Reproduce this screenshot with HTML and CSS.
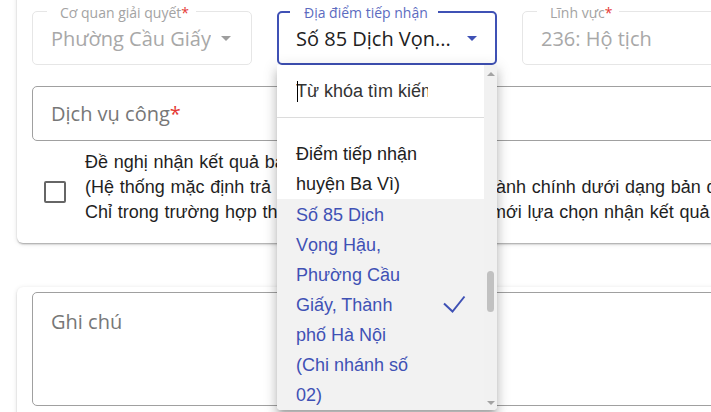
FILE: index.html
```html
<!DOCTYPE html>
<html lang="vi">
<head>
<meta charset="utf-8">
<title>Nộp hồ sơ</title>
<link rel="stylesheet" href="styles.css">
</head>
<body>
<div class="page">
  <div class="card card-top">
    <div class="row">
      <div class="field disabled">
        <span class="flabel">Cơ quan giải quyết<span class="req">*</span></span>
        <span class="fvalue">Phường Cầu Giấy</span>
        <span class="arrow"></span>
      </div>
      <div class="field focused">
        <span class="flabel">Địa điểm tiếp nhận</span>
        <span class="fvalue">Số 85 Dịch Vọn...</span>
        <span class="arrow"></span>
      </div>
      <div class="field disabled">
        <span class="flabel">Lĩnh vực<span class="req">*</span></span>
        <span class="fvalue">236: Hộ tịch</span>
        <span class="arrow"></span>
      </div>
    </div>
    <div class="input-box"><span class="ph">Dịch vụ công<span class="req">*</span></span></div>
    <div class="check-row">
      <span class="checkbox"></span>
      <div class="check-text">
        <div>Đề nghị nhận kết quả bản giấy</div>
        <div>(Hệ thống mặc định trả kết quả giải quyết thủ tục hành chính dưới dạng bản điện tử.</div>
        <div>Chỉ trong trường hợp thực sự cần thiết, công dân mới lựa chọn nhận kết quả bản giấy)</div>
      </div>
    </div>
  </div>
  <div class="card card-note">
    <div class="textarea"><span class="ph">Ghi chú</span></div>
  </div>
</div>

<div class="dropdown">
  <div class="dd-main">
    <div class="dd-search"><span class="caret"></span><span class="search-text">Từ khóa tìm kiếm</span></div>
    <div class="dd-list">
      <div class="option">
        <span class="opt-text">Điểm tiếp nhận huyện Ba Vì)</span>
      </div>
      <div class="option selected">
        <span class="opt-text">Số 85 Dịch Vọng Hậu, Phường Cầu Giấy, Thành phố Hà Nội (Chi nhánh số 02)</span>
        <svg class="check" width="24" height="18" viewBox="0 0 24 18"><polyline points="2,8.5 10.5,16.5 22.5,1.5" fill="none" stroke="#3f51b5" stroke-width="2"/></svg>
      </div>
    </div>
  </div>
  <div class="scrollbar">
    <span class="sb-up"></span>
    <span class="sb-track"><span class="sb-thumb"></span></span>
    <span class="sb-down"></span>
  </div>
</div>
</body>
</html>
```
FILE: styles.css
```css
* { box-sizing: border-box; }
html, body { margin: 0; padding: 0; background: #fff; overflow: hidden; }
body {
  width: 711px;
  height: 412px;
  position: relative;
  font-family: "Liberation Sans", Arial, sans-serif;
  color: #212121;
}

.page { padding-left: 17px; }

.card {
  background: #fff;
  width: 760px;
  border-radius: 6px;
  box-shadow: 0 2px 2px -1px rgba(0,0,0,.22), 0 1px 2px rgba(0,0,0,.12), 0 1px 5px rgba(0,0,0,.12);
}
.card-top {
  margin-top: -20px;
  height: 263px;
  padding: 31px 0 0 15px;
}

.row { display: flex; gap: 25px; }

.field {
  position: relative;
  width: 220px;
  height: 54px;
  flex: none;
  display: flex;
  align-items: center;
  padding: 0 20px 0 18px;
  border: 1px solid #e6e6e6;
  border-radius: 5px;
  font-family: "Open Sans", "Noto Sans", sans-serif;
  font-size: 20px;
  color: #a8a8a8;
}
.field .fvalue { white-space: nowrap; overflow: hidden; }
.field .flabel {
  position: absolute;
  top: -7px;
  left: 14px;
  padding: 0 7px 0 13px;
  background: #fff;
  font-size: 14px;
  line-height: 16px;
  color: #a3a3a3;
  white-space: nowrap;
}
.req { color: #e53935; }
.arrow {
  margin-left: auto;
  width: 0; height: 0;
  border-left: 5px solid transparent;
  border-right: 5px solid transparent;
  border-top: 5px solid #9e9e9e;
}
.field.focused {
  border: 2px solid #3f51b5;
  padding: 0 18px 0 17px;
  color: #212121;
}
.field.focused .fvalue { margin-right: 4px; }
.field.focused .flabel { left: 11px; top: -8px; padding: 0 10px 0 14px; color: #5c6bc0; }
.field.focused .arrow { border-top-color: #3f51b5; }

.input-box {
  margin-top: 21px;
  height: 55px;
  border: 1px solid #a0a0a0;
  border-radius: 5px;
  display: flex;
  align-items: center;
  padding-left: 18px;
  font-family: "Open Sans", "Noto Sans", sans-serif;
  font-size: 20px;
  color: #777;
}

.check-row {
  display: flex;
  align-items: center;
  margin-top: 9px;
  padding-left: 12px;
}
.checkbox {
  width: 22px; height: 22px;
  flex: none;
  border: 2px solid #666;
  border-radius: 2px;
  margin-top: 8px;
}
.check-text {
  margin-left: 19px;
  font-size: 18px;
  word-spacing: 0.7px;
  line-height: 25px;
  white-space: nowrap;
  color: #1f1f1f;
}

.card-note {
  margin-top: 44px;
  height: 200px;
  padding: 5px 0 0 15px;
}
.textarea {
  height: 114px;
  border: 1px solid #a0a0a0;
  border-radius: 5px;
  padding: 16px 18px;
  font-family: "Open Sans", "Noto Sans", sans-serif;
  font-size: 20px;
  line-height: 26px;
  color: #777;
}

/* dropdown overlay */
.dropdown {
  position: absolute;
  left: 277px;
  top: 65px;
  width: 220px;
  height: 345px;
  background: #fff;
  display: flex;
  border-radius: 0 0 4px 4px;
  overflow: hidden;
  box-shadow: 0 5px 5px -3px rgba(0,0,0,.2), 0 8px 10px 1px rgba(0,0,0,.14), 0 3px 14px 2px rgba(0,0,0,.12);
}
.dd-main { width: 207px; flex: none; display: flex; flex-direction: column; }
.dd-search {
  height: 53px;
  flex: none;
  border-bottom: 1px solid #dcdcdc;
  display: flex;
  align-items: center;
  padding-left: 19px;
  font-size: 18px;
  color: #333;
  position: relative;
}
.search-text { width: 132px; overflow: hidden; white-space: nowrap; }
.caret {
  position: absolute;
  left: 20px;
  top: 16px;
  width: 1px;
  height: 21px;
  background: #000;
}
.dd-list { flex: 1; overflow: hidden; padding-top: 21px; }
.option {
  display: flex;
  align-items: center;
  padding-left: 19px;
  font-size: 18px;
  line-height: 30px;
  color: #212121;
}
.opt-text { width: 122px; flex: none; }
.option.selected { background: #f2f2f2; color: #3f51b5; height: 211px; }
.check { margin-left: 24px; margin-top: -1px; }

.scrollbar {
  width: 13px;
  flex: none;
  background: #f1f1f1;
  display: flex;
  flex-direction: column;
  align-items: center;
  padding: 7px 0 5px;
}
.sb-up, .sb-down {
  width: 0; height: 0;
  border-left: 4px solid transparent;
  border-right: 4px solid transparent;
}
.sb-up { border-bottom: 4px solid #a3a3a3; }
.sb-down { border-top: 4px solid #a3a3a3; }
.sb-track { flex: 1; width: 100%; display: flex; justify-content: center; padding-top: 195px; }
.sb-thumb { width: 7px; height: 41px; border-radius: 4px; background: #c1c1c1; }
```
